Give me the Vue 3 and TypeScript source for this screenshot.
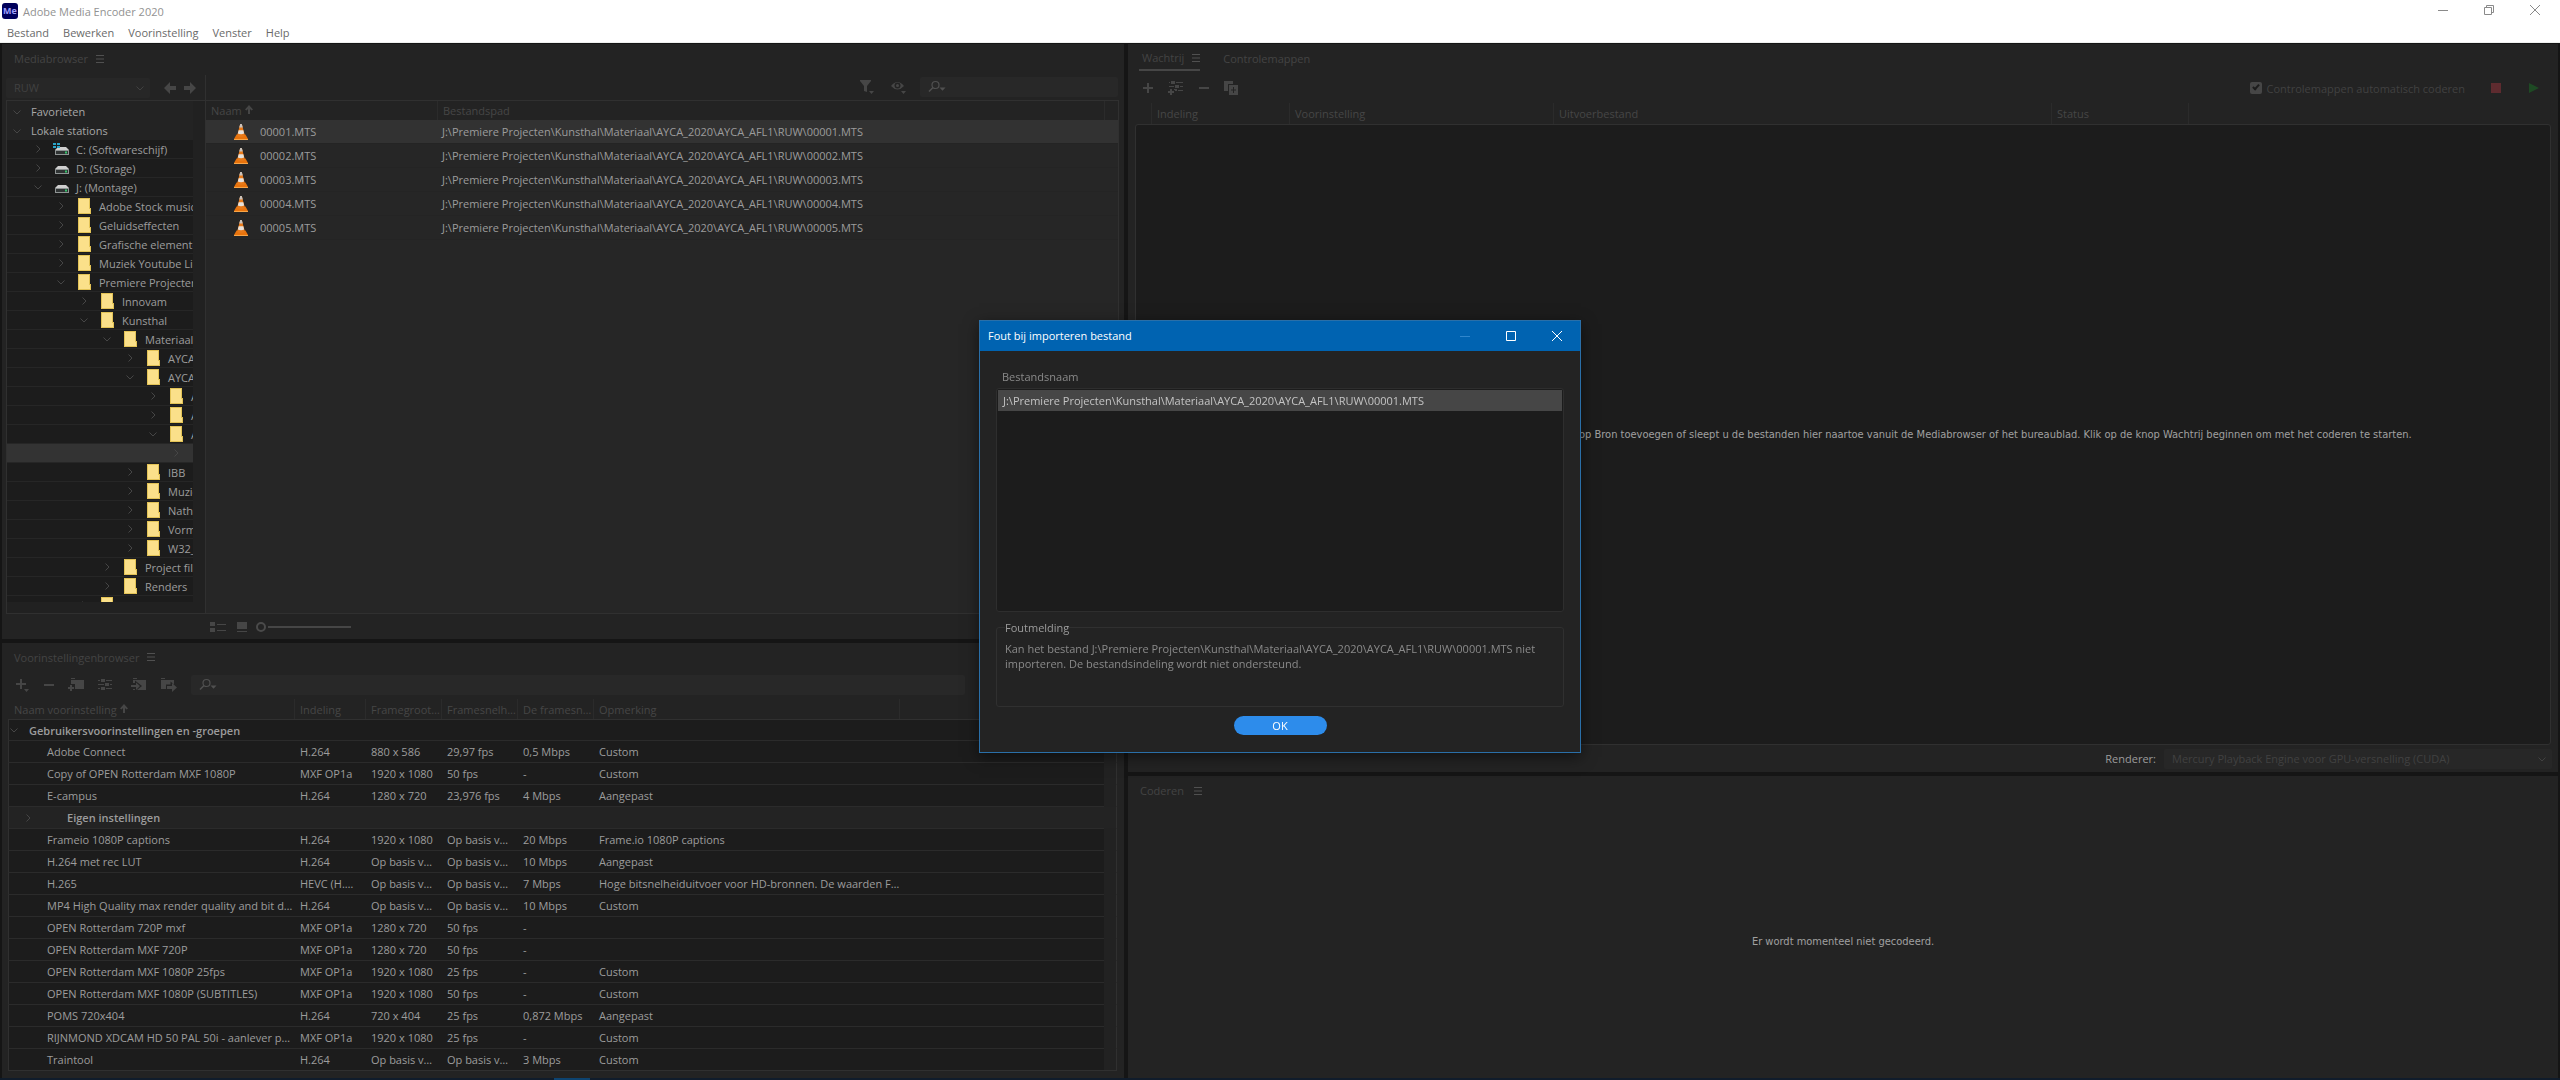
<script setup lang="ts">
interface TreeNode {
  label: string
  level: number
  open: boolean
  icon: 'drive' | 'system' | 'folder'
  selected?: boolean
}

interface Preset {
  name: string
  group?: boolean
  cells?: string[]
}

const menus = ['Bestand', 'Bewerken', 'Voorinstelling', 'Venster', 'Help']

const node = (level: number, open: boolean, label: string, icon: TreeNode['icon'] = 'folder', selected = false): TreeNode =>
  ({ level, open, label, icon, selected })

const tree: TreeNode[] = [
  node(0, false, 'C: (Softwareschijf)', 'system'),
  node(0, false, 'D: (Storage)', 'drive'),
  node(0, true, 'J: (Montage)', 'drive'),
  node(1, false, 'Adobe Stock music'),
  node(1, false, 'Geluidseffecten'),
  node(1, false, 'Grafische elementen'),
  node(1, false, 'Muziek Youtube Library'),
  node(1, true, 'Premiere Projecten'),
  node(2, false, 'Innovam'),
  node(2, true, 'Kunsthal'),
  node(3, true, 'Materiaal'),
  node(4, false, 'AYCA_2019'),
  node(4, true, 'AYCA_2020'),
  node(5, false, 'AYCA_AFL3'),
  node(5, false, 'AYCA_AFL2'),
  node(5, true, 'AYCA_AFL1'),
  node(6, false, 'RUW', 'folder', true),
  node(4, false, 'IBB'),
  node(4, false, 'Muziek'),
  node(4, false, 'Nathalie'),
  node(4, false, 'Vormgeving'),
  node(4, false, 'W32_2020'),
  node(3, false, 'Project files'),
  node(3, false, 'Renders'),
  node(2, false, 'Overig'),
]

const folderPath = 'J:\\Premiere Projecten\\Kunsthal\\Materiaal\\AYCA_2020\\AYCA_AFL1\\RUW\\'
const files = ['00001.MTS', '00002.MTS', '00003.MTS', '00004.MTS', '00005.MTS']

const presetColumns = ['Indeling', 'Framegroot…', 'Framesnelh…', 'De framesn…', 'Opmerking']

const presets: Preset[] = [
  { name: 'Adobe Connect', cells: ['H.264', '880 x 586', '29,97 fps', '0,5 Mbps', 'Custom'] },
  { name: 'Copy of OPEN Rotterdam MXF 1080P', cells: ['MXF OP1a', '1920 x 1080', '50 fps', '-', 'Custom'] },
  { name: 'E-campus', cells: ['H.264', '1280 x 720', '23,976 fps', '4 Mbps', 'Aangepast'] },
  { name: 'Eigen instellingen', group: true },
  { name: 'Frameio 1080P captions', cells: ['H.264', '1920 x 1080', 'Op basis v…', '20 Mbps', 'Frame.io 1080P captions'] },
  { name: 'H.264 met rec LUT', cells: ['H.264', 'Op basis v…', 'Op basis v…', '10 Mbps', 'Aangepast'] },
  { name: 'H.265', cells: ['HEVC (H.…', 'Op basis v…', 'Op basis v…', '7 Mbps', 'Hoge bitsnelheiduitvoer voor HD-bronnen. De waarden F…'] },
  { name: 'MP4 High Quality max render quality and bit d…', cells: ['H.264', 'Op basis v…', 'Op basis v…', '10 Mbps', 'Custom'] },
  { name: 'OPEN Rotterdam 720P mxf', cells: ['MXF OP1a', '1280 x 720', '50 fps', '-', ''] },
  { name: 'OPEN Rotterdam MXF 720P', cells: ['MXF OP1a', '1280 x 720', '50 fps', '-', ''] },
  { name: 'OPEN Rotterdam MXF 1080P 25fps', cells: ['MXF OP1a', '1920 x 1080', '25 fps', '-', 'Custom'] },
  { name: 'OPEN Rotterdam MXF 1080P (SUBTITLES)', cells: ['MXF OP1a', '1920 x 1080', '50 fps', '-', 'Custom'] },
  { name: 'POMS 720x404', cells: ['H.264', '720 x 404', '25 fps', '0,872 Mbps', 'Aangepast'] },
  { name: 'RIJNMOND XDCAM HD 50 PAL 50i - aanlever p…', cells: ['MXF OP1a', '1920 x 1080', '25 fps', '-', 'Custom'] },
  { name: 'Traintool', cells: ['H.264', 'Op basis v…', 'Op basis v…', '3 Mbps', 'Custom'] },
]
</script>

<template>
  <div class="app">
    <!-- Shared glyphs -->
    <svg class="sprite" width="0" height="0" aria-hidden="true">
      <symbol id="i-menu" viewBox="0 0 8 8"><path d="M0 .5h8M0 4h8M0 7.500h8" stroke="currentColor" fill="none" /></symbol>
      <symbol id="i-right" viewBox="0 0 8 8"><path d="M2.500 .5 6 4 2.500 7.500" stroke="currentColor" fill="none" /></symbol>
      <symbol id="i-down" viewBox="0 0 8 8"><path d="M.5 2.500 4 6 7.500 2.500" stroke="currentColor" fill="none" /></symbol>
      <symbol id="i-sort" viewBox="0 0 8 10"><path d="M4 0 8 4.500 6.500 5.500 5 4V9H3V4L1.500 5.500 0 4.500Z" fill="currentColor" /></symbol>
      <symbol id="i-search" viewBox="0 0 18 14">
        <circle cx="7.500" cy="5" r="3.500" stroke="currentColor" fill="none" stroke-width="1.200" />
        <path d="M5 7.500 1 11.500" stroke="currentColor" fill="none" stroke-width="1.400" />
        <path d="M11.500 7.500h6l-3 3.200z" fill="currentColor" />
      </symbol>
      <symbol id="i-plus" viewBox="0 0 10 10"><path d="M5 0V10M0 5H10" stroke="currentColor" stroke-width="2" fill="none" /></symbol>
      <symbol id="i-minus" viewBox="0 0 10 10"><path d="M0 5H10" stroke="currentColor" stroke-width="2" fill="none" /></symbol>
      <symbol id="i-folder" viewBox="0 0 14 16">
        <path d="M0 0H12V10H13V16H0Z" fill="#e3c356" />
        <path d="M1 1H11V15H1Z" fill="#fbe08a" />
        <path d="M11 11H12V15H11Z" fill="#fbe08a" />
      </symbol>
      <symbol id="i-drive" viewBox="0 0 14 8">
        <path d="M3 0H11L14 3H0Z" fill="#cfcfcf" />
        <path d="M0 3H14V8H0Z" fill="#8f9494" />
        <path d="M1 4H13V7H1Z" fill="#303434" />
        <path d="M10 4.500H12V6.500H10Z" fill="#35c46a" />
      </symbol>
      <symbol id="i-cone" viewBox="0 0 14 16">
        <path d="M2.500 10.500H11.500L14 15V16H0V15Z" fill="#e8730c" />
        <path d="M0 15H14V16H0Z" fill="#f7a548" />
        <path d="M6.200 0H7.800L11 12Q7 14.200 3 12Z" fill="#e87a1a" />
        <path d="M6.200 0H7.800L8.800 3.500H5.200Z" fill="#c9c4bf" />
        <path d="M4.700 6.200H9.300L10.200 9.500Q7 11 3.800 9.500Z" fill="#e6e2dd" />
      </symbol>
    </svg>

    <header class="titlebar">
      <div class="title-row">
        <span class="logo">Me</span>
        <h1>Adobe Media Encoder 2020</h1>
        <div class="window-buttons">
          <button type="button" aria-label="Minimaliseren"><svg width="10" height="10"><path d="M0 5.500H10" /></svg></button>
          <button type="button" aria-label="Verkleinen"><svg width="10" height="10"><path d="M.5 2.500H7.500V9.500H.5ZM2.500 2.500V.5H9.500V7.500H7.500" /></svg></button>
          <button type="button" aria-label="Sluiten"><svg width="10" height="10"><path d="M0 0 10 10M10 0 0 10" /></svg></button>
        </div>
      </div>
      <nav class="menubar">
        <button v-for="m in menus" :key="m" type="button">{{ m }}</button>
      </nav>
    </header>

    <main class="workspace">
      <div class="column left-column">
        <!-- Mediabrowser -->
        <section class="panel media">
          <div class="tabs">
            <button type="button" class="tab">Mediabrowser</button>
            <svg class="burger" width="8" height="8"><use href="#i-menu" /></svg>
          </div>
          <div class="media-tools">
            <div class="media-nav">
              <div class="select-wrap folder-select">
                <select aria-label="Map"><option>RUW</option></select>
                <svg width="8" height="8"><use href="#i-down" /></svg>
              </div>
              <button type="button" class="icon-btn" aria-label="Vorige">
                <svg width="12" height="12"><path d="M0 6 6 0V4H12V8H6V12Z" fill="currentColor" /></svg>
              </button>
              <button type="button" class="icon-btn" aria-label="Volgende">
                <svg width="12" height="12"><path d="M12 6 6 0V4H0V8H6V12Z" fill="currentColor" /></svg>
              </button>
            </div>
            <button type="button" class="icon-btn" aria-label="Filter">
              <svg width="14" height="14"><path d="M0 0H11V1L7 6V12L4 11V6L0 1ZM9 11H14L11.500 14Z" fill="currentColor" /></svg>
            </button>
            <button type="button" class="icon-btn eye" aria-label="Weergave">
              <svg width="15" height="14">
                <path d="M0 6Q6.500-2 13 6 6.500 13 0 6ZM10 11H15L12.500 14Z" fill="currentColor" />
                <circle cx="6.500" cy="5.500" r="3" fill="#232323" /><circle cx="6.500" cy="5.500" r="1.500" fill="currentColor" />
              </svg>
            </button>
            <label class="search media-search">
              <svg width="18" height="14"><use href="#i-search" /></svg>
              <input type="text" aria-label="Zoeken in media">
            </label>
          </div>

          <div class="media-body">
            <div class="tree-pane">
              <ul class="tree">
                <li class="root"><svg width="8" height="8"><use href="#i-down" /></svg>Favorieten</li>
                <li class="root"><svg width="8" height="8"><use href="#i-down" /></svg>Lokale stations</li>
                <li
                  v-for="(n, i) in tree" :key="i" class="node" :class="{ selected: n.selected }"
                  :style="{ paddingLeft: 27 + n.level * 23 + 'px' }"
                >
                  <svg class="chev" width="8" height="8"><use :href="n.open ? '#i-down' : '#i-right'" /></svg>
                  <svg v-if="n.icon === 'folder'" class="folder" width="14" height="16"><use href="#i-folder" /></svg>
                  <svg v-else class="drive" width="14" height="16">
                    <use href="#i-drive" x="0" y="6" width="14" height="8" />
                    <path v-if="n.icon === 'system'" d="M-2 2H1V4H-2ZM2 2H5V4H2ZM-2 5H1V7H-2ZM2 5H5V7H2Z" fill="#2aa5c9" />
                  </svg>
                  <span>{{ n.label }}</span>
                </li>
              </ul>
            </div>
            <div class="file-pane">
              <table class="files">
                <colgroup><col class="c-file"><col><col class="c-end"></colgroup>
                <thead>
                  <tr>
                    <th>Naam <svg width="8" height="10"><use href="#i-sort" /></svg></th>
                    <th>Bestandspad</th>
                    <th />
                  </tr>
                </thead>
                <tbody>
                  <tr v-for="(f, i) in files" :key="f" :class="{ selected: i === 0 }">
                    <td><div class="file-name"><svg width="14" height="16"><use href="#i-cone" /></svg>{{ f }}</div></td>
                    <td>{{ folderPath + f }}</td>
                    <td />
                  </tr>
                </tbody>
              </table>
            </div>
          </div>

          <div class="media-footer">
            <button type="button" class="icon-btn" aria-label="Lijst">
              <svg width="16" height="10"><path d="M0 0H5V4H0ZM0 6H5V10H0ZM7 2H16V3H7ZM7 8H16V9H7Z" fill="currentColor" /></svg>
            </button>
            <button type="button" class="icon-btn" aria-label="Miniaturen">
              <svg width="10" height="10"><path d="M0 0H10V7H0ZM0 9H10V10H0Z" fill="currentColor" /></svg>
            </button>
            <input type="range" class="zoom" value="0" aria-label="Miniatuurgrootte">
          </div>
        </section>

        <!-- Voorinstellingenbrowser -->
        <section class="panel presets">
          <div class="tabs">
            <button type="button" class="tab">Voorinstellingenbrowser</button>
            <svg class="burger" width="8" height="8"><use href="#i-menu" /></svg>
          </div>
          <div class="preset-tools">
            <button type="button" class="icon-btn" aria-label="Nieuw">
              <svg width="14" height="14"><path d="M4 1H6V5H10V7H6V11H4V7H0V5H4ZM8 11H13L10.500 14Z" fill="currentColor" /></svg>
            </button>
            <button type="button" class="icon-btn" aria-label="Verwijderen">
              <svg width="10" height="10"><use href="#i-minus" /></svg>
            </button>
            <button type="button" class="icon-btn" aria-label="Nieuwe groep">
              <svg width="16" height="14">
                <path d="M3 0H7V1H3ZM3 2H16V11H3Z" fill="currentColor" />
                <path d="M1 6H7V12H1Z" fill="#232323" />
                <path d="M2 7H4V9H6V11H4V13H2V11H0V9H2Z" fill="currentColor" />
              </svg>
            </button>
            <button type="button" class="icon-btn" aria-label="Instellingen">
              <svg width="14" height="14"><path d="M0 2H2V3H0ZM3 1H7V4H3ZM8 2H14V3H8ZM0 6H6V7H0ZM7 5H11V8H7ZM12 6H14V7H12ZM0 10H2V11H0ZM3 9H7V12H3ZM8 10H14V11H8Z" fill="currentColor" /></svg>
            </button>
            <button type="button" class="icon-btn import" aria-label="Importeren">
              <svg width="16" height="14">
                <path d="M2 0H6V1H2ZM2 2H15V12H2Z" fill="currentColor" />
                <path d="M0 5H4V2.500L11 8 4 13.500V11H0Z" fill="#232323" />
                <path d="M0 7H5V4.500L9 8 5 12V9H0Z" fill="currentColor" />
              </svg>
            </button>
            <button type="button" class="icon-btn" aria-label="Exporteren">
              <svg width="16" height="14">
                <path d="M0 0H4V1H0ZM0 2H13V11H0Z" fill="currentColor" />
                <path d="M5 6.500H9.500V3.500L16 9V12H5Z" fill="#232323" />
                <path d="M6 8H11V5L16 9.500 11 14V11H6Z" fill="currentColor" />
              </svg>
            </button>
            <label class="search preset-search">
              <svg width="18" height="14"><use href="#i-search" /></svg>
              <input type="text" aria-label="Zoeken in voorinstellingen">
            </label>
          </div>
          <table class="preset-table">
            <colgroup>
              <col class="c-name"><col class="c-format"><col class="c-mid"><col class="c-mid"><col class="c-mid"><col class="c-note"><col><col class="c-gutter">
            </colgroup>
            <thead>
              <tr>
                <th>Naam voorinstelling <svg width="8" height="10"><use href="#i-sort" /></svg></th>
                <th v-for="c in presetColumns" :key="c">{{ c }}</th>
                <th />
                <th class="plain" />
              </tr>
            </thead>
            <tbody>
              <tr class="top-group">
                <td colspan="7"><div><svg width="8" height="8"><use href="#i-down" /></svg>Gebruikersvoorinstellingen en -groepen</div></td>
                <td class="gutter" />
              </tr>
              <template v-for="p in presets" :key="p.name">
                <tr v-if="p.group" class="sub-group">
                  <td colspan="7"><div><svg width="8" height="8"><use href="#i-right" /></svg>{{ p.name }}</div></td>
                  <td class="gutter" />
                </tr>
                <tr v-else>
                  <td class="preset-name">{{ p.name }}</td>
                  <td v-for="(c, i) in p.cells" :key="i">{{ c }}</td>
                  <td />
                  <td class="gutter" />
                </tr>
              </template>
            </tbody>
          </table>
        </section>
      </div>

      <div class="column right-column">
        <!-- Wachtrij -->
        <section class="panel queue">
          <div class="tabs">
            <div class="active-tab">
              <button type="button" class="tab">Wachtrij</button>
              <svg class="burger" width="8" height="8"><use href="#i-menu" /></svg>
            </div>
            <button type="button" class="tab">Controlemappen</button>
          </div>
          <div class="queue-tools">
            <button type="button" class="icon-btn" aria-label="Bron toevoegen"><svg width="10" height="10"><use href="#i-plus" /></svg></button>
            <button type="button" class="icon-btn" aria-label="Uitvoer toevoegen">
              <svg width="16" height="14"><path d="M1 1H2V2H1ZM3 0H7V3H3ZM8 1H15V2H8ZM1 5H6V6H1ZM7 4H11V7H7ZM12 5H15V6H12ZM2 8H4V10H6V12H4V14H2V12H0V10H2ZM6 8H9V10H7V9H6ZM10 9H15V10H10Z" fill="currentColor" /></svg>
            </button>
            <button type="button" class="icon-btn" aria-label="Verwijderen"><svg width="10" height="10"><use href="#i-minus" /></svg></button>
            <button type="button" class="icon-btn duplicate" aria-label="Dupliceren">
              <svg width="14" height="14"><path d="M0 0H9V3H4V10H0Z" fill="currentColor" /><path fill-rule="evenodd" d="M5 4H14V14H5ZM9 6V8.500H7V9.500H9V12H10V9.500H12V8.500H10V6Z" fill="currentColor" /></svg>
            </button>
            <label class="auto"><input type="checkbox" checked>Controlemappen automatisch coderen</label>
            <button type="button" class="icon-btn stop" aria-label="Stoppen"><svg width="10" height="10"><path d="M0 0H10V10H0Z" fill="#5e2b2f" /></svg></button>
            <button type="button" class="icon-btn start" aria-label="Wachtrij beginnen"><svg width="10" height="10"><path d="M0 0 10 5 0 10Z" fill="#1e4a24" /></svg></button>
          </div>
          <table class="queue-table">
            <colgroup><col class="q-pad"><col class="q-format"><col class="q-preset"><col class="q-output"><col class="q-status"><col></colgroup>
            <thead>
              <tr><th /><th>Indeling</th><th>Voorinstelling</th><th>Uitvoerbestand</th><th>Status</th><th /></tr>
            </thead>
          </table>
          <div class="drop-zone">
            <p>Als u items aan deze wachtrij wilt toevoegen, klikt u op de knop Bron toevoegen of sleept u de bestanden hier naartoe vanuit de Mediabrowser of het bureaublad. Klik op de knop Wachtrij beginnen om met het coderen te starten.</p>
          </div>
          <div class="renderer">
            <label for="renderer">Renderer:</label>
            <div class="select-wrap">
              <select id="renderer"><option>Mercury Playback Engine voor GPU-versnelling (CUDA)</option></select>
              <svg width="8" height="8"><use href="#i-down" /></svg>
            </div>
          </div>
        </section>

        <!-- Coderen -->
        <section class="panel encoding">
          <div class="tabs">
            <button type="button" class="tab">Coderen</button>
            <svg class="burger" width="8" height="8"><use href="#i-menu" /></svg>
          </div>
          <p>Er wordt momenteel niet gecodeerd.</p>
        </section>
      </div>
    </main>

    <div class="taskbar"><span /></div>

    <!-- Foutmelding -->
    <div class="overlay">
      <div class="dialog" role="dialog" aria-labelledby="dialog-title">
        <div class="dialog-title">
          <h2 id="dialog-title">Fout bij importeren bestand</h2>
          <button type="button" class="dim" aria-label="Minimaliseren"><svg width="10" height="10"><path d="M0 5.500H10" /></svg></button>
          <button type="button" aria-label="Maximaliseren"><svg width="10" height="10"><path d="M.5 .5H9.500V9.500H.5Z" /></svg></button>
          <button type="button" aria-label="Sluiten"><svg width="10" height="10"><path d="M0 0 10 10M10 0 0 10" /></svg></button>
        </div>
        <div class="dialog-body">
          <span id="file-label" class="list-label">Bestandsnaam</span>
          <ul class="error-files" aria-labelledby="file-label">
            <li>{{ folderPath + files[0] }}</li>
          </ul>
          <fieldset>
            <legend>Foutmelding</legend>
            <p>Kan het bestand {{ folderPath + files[0] }} niet importeren. De bestandsindeling wordt niet ondersteund.</p>
          </fieldset>
          <button type="button" class="ok">OK</button>
        </div>
      </div>
    </div>
  </div>
</template>

<style>
html,
body {
  margin: 0;
  background: #151515;
}
</style>

<style scoped>
.app {
  display: flex;
  flex-direction: column;
  height: 100vh;
  overflow: hidden;
  background: #151515;
  color: #9c9c9c;
  font: 11px/15px "Open Sans", "Noto Sans", sans-serif;
}
.app *,
.app *::before {
  box-sizing: border-box;
}
.sprite {
  position: absolute;
}
svg {
  flex: none;
  overflow: visible;
}
h1,
h2,
p,
ul {
  margin: 0;
  padding: 0;
  font: inherit;
  list-style: none;
}
button,
input,
select {
  margin: 0;
  padding: 0;
  border: 0;
  background: none;
  color: inherit;
  font: inherit;
}
.icon-btn {
  display: flex;
  flex: none;
  color: #464646;
}

/* Title bar */
.titlebar {
  flex: none;
  height: 43px;
  background: #fff;
  border-bottom: 1px solid #eef0ee;
}
.title-row {
  display: flex;
  align-items: center;
  height: 22px;
  padding-left: 2px;
}
.logo {
  width: 16px;
  height: 16px;
  margin-right: 5px;
  border-radius: 3px;
  background: #00005b;
  color: #9f9ffb;
  font-size: 9px;
  font-weight: 700;
  text-align: center;
}
.title-row h1 {
  color: #929292;
}
.window-buttons {
  display: flex;
  gap: 36px;
  margin-left: auto;
  padding: 0 20px 2px 0;
}
.window-buttons button {
  display: flex;
}
.window-buttons path {
  fill: none;
  stroke: #8a8a8a;
}
.menubar {
  display: flex;
  gap: 14px;
  padding: 2px 0 0 7px;
  line-height: 17px;
  color: #6a6a6a;
}

/* Workspace */
.workspace {
  flex: 1;
  display: grid;
  grid-template-columns: 1122fr 1430fr;
  gap: 4px;
  min-height: 0;
  padding: 1px 2px 0;
}
.column {
  display: grid;
  gap: 4px;
  min-width: 0;
  min-height: 0;
}
.left-column {
  grid-template-rows: 595fr 435fr;
}
.right-column {
  grid-template-rows: 728fr 302fr;
}
.panel {
  display: flex;
  flex-direction: column;
  min-width: 0;
  min-height: 0;
  overflow: hidden;
  background: #232323;
}
.tabs {
  display: flex;
  flex: none;
  align-items: center;
  gap: 8px;
  height: 29px;
  padding-left: 12px;
  color: #444;
}
.burger {
  color: #505050;
}
.search {
  display: flex;
  align-items: center;
  height: 20px;
  padding-left: 8px;
  border-radius: 2px;
  background: #282828;
  color: #505050;
}
.search input {
  flex: 1;
  min-width: 0;
  outline: 0;
}
.select-wrap {
  position: relative;
  flex: 1;
  height: 20px;
  border-radius: 2px;
  background: #272727;
  color: #414141;
}
.select-wrap select {
  width: 100%;
  height: 100%;
  padding-left: 8px;
  appearance: none;
}
.select-wrap svg {
  position: absolute;
  top: 6px;
  right: 6px;
}

/* Mediabrowser */
.media-tools {
  display: flex;
  flex: none;
  align-items: center;
  height: 27px;
  padding: 0 6px 0 4px;
}
.media-nav {
  display: flex;
  align-items: center;
  gap: 8px;
  width: 200px;
  height: 25px;
  margin-right: auto;
  padding-right: 9px;
  border-right: 1px solid #303030;
  align-self: end;
}
.folder-select {
  flex: none;
  width: 144px;
  margin-right: 6px;
}
.eye {
  margin: 0 14px 0 17px;
}
.media-search {
  width: 198px;
}
.media-body {
  display: flex;
  flex: 1;
  min-height: 0;
  margin: 0 5px 0 4px;
  border: 1px solid #303030;
}
.tree-pane {
  width: 199px;
  padding: 0 12px 11px 0;
  border-right: 1px solid #303030;
  background: #212121;
}
.tree {
  height: 100%;
  padding-top: 1px;
  overflow: hidden;
  background: #232323;
}
.tree li {
  display: flex;
  align-items: center;
  height: 19px;
  white-space: nowrap;
  overflow: hidden;
}
.tree .root {
  gap: 10px;
  padding-left: 6px;
  color: #a8a8a8;
}
.tree svg {
  color: #464646;
}
.tree .node {
  border-bottom: 1px solid #262626;
  background: #1c1c1c;
}
.tree .node.selected {
  background: #333;
}
.folder,
.drive {
  margin: 0 7px 0 13px;
}
.file-pane {
  flex: 1;
  min-width: 0;
  background: #262626;
}
table {
  width: 100%;
  table-layout: fixed;
  border-collapse: separate;
  border-spacing: 0;
}
th,
td {
  overflow: hidden;
  padding: 0 0 0 5px;
  text-align: left;
  white-space: nowrap;
  font-weight: 400;
}
th {
  color: #464646;
  border-left: 1px solid #2b2b2b;
}
th:first-child {
  border-left: 0;
}
.files th {
  height: 19px;
  background: #232323;
}
.files td {
  height: 24px;
  border-bottom: 1px solid #242424;
}
.files .selected td {
  background: #323232;
}
.c-file {
  width: 231px;
}
.c-end {
  width: 14px;
}
.file-name {
  display: flex;
  align-items: center;
  gap: 12px;
  padding-left: 23px;
}
.media-footer {
  display: flex;
  flex: none;
  align-items: center;
  gap: 11px;
  height: 25px;
  padding-left: 208px;
}
.zoom {
  width: 95px;
  height: 10px;
  margin-left: -2px;
  appearance: none;
  background: linear-gradient(#464646, #464646) 12px 4px / 83px 2px no-repeat;
}
.zoom::-webkit-slider-thumb {
  appearance: none;
  width: 10px;
  height: 10px;
  border: 2px solid #4a4a4a;
  border-radius: 50%;
  background: #232323;
}

/* Voorinstellingen */
.presets .tabs {
  height: 28px;
}
.preset-tools {
  display: flex;
  flex: none;
  align-items: center;
  height: 28px;
  padding-left: 14px;
  gap: 14px;
}
.import {
  margin-left: 5px;
}
.preset-search {
  width: 774px;
}
.preset-table {
  width: auto;
  margin: 0 7px 0 6px;
}
.preset-table th {
  height: 20px;
}
.preset-table th:first-child {
  padding-left: 6px;
}
.preset-table th.plain {
  border-left: 0;
}
.preset-table td {
  height: 22px;
  padding-left: 6px;
  border-bottom: 1px solid #2b2b2b;
  background: #1c1c1c;
}
.preset-table td:first-child {
  border-left: 1px solid #303030;
}
.preset-table .top-group td {
  border-top: 1px solid #303030;
}
.preset-table td.preset-name {
  padding-left: 38px;
}
.preset-table td.gutter {
  border-right: 1px solid #303030;
  border-bottom-color: #222;
  background: #222;
}
.preset-table tr:last-child td {
  border-bottom-color: #303030;
}
.top-group div,
.sub-group div {
  display: flex;
  align-items: center;
  gap: 11px;
  font-weight: 600;
}
.top-group svg,
.sub-group svg {
  color: #464646;
}
.preset-table .top-group td:first-child {
  padding-left: 1px;
}
.preset-table .sub-group td {
  background: #232323;
}
.preset-table .sub-group td:first-child {
  padding-left: 15px;
}
.sub-group div {
  gap: 35px;
}
.c-name {
  width: 286px;
}
.c-format {
  width: 71px;
}
.c-mid {
  width: 76px;
}
.c-note {
  width: 301px;
}
.c-gutter {
  width: 13px;
}

/* Wachtrij */
.queue .tabs {
  gap: 23px;
  padding-left: 11px;
}
.active-tab {
  display: flex;
  align-items: center;
  gap: 8px;
  align-self: stretch;
  padding: 2px 0 0 3px;
  border-bottom: 2px solid #464646;
  margin-bottom: 2px;
}
.queue-tools {
  display: flex;
  flex: none;
  align-items: center;
  height: 30px;
  padding: 0 19px 0 15px;
  gap: 15px;
}
.auto {
  display: flex;
  align-items: center;
  gap: 4px;
  margin-left: auto;
  color: #414141;
}
.auto input {
  width: 12px;
  height: 12px;
  border-radius: 2px;
  appearance: none;
  background: #464646;
}
.auto input::before {
  content: "";
  display: block;
  width: 4px;
  height: 7px;
  margin: 1px 0 0 4px;
  border: solid #1c1c1c;
  border-width: 0 2px 2px 0;
  transform: rotate(42deg);
}
.stop {
  margin: 0 13px 0 11px;
}
.queue-table {
  width: auto;
  margin: 0 7px 0 8px;
}
.queue-table th {
  height: 21px;
}
.q-pad {
  width: 15px;
}
.q-format {
  width: 138px;
}
.q-preset {
  width: 264px;
}
.q-output {
  width: 498px;
}
.q-status {
  width: 137px;
}
.drop-zone {
  display: grid;
  flex: 1;
  place-items: center;
  min-height: 0;
  margin: 0 7px;
  border: 1px solid #303030;
  border-radius: 3px;
  background: #1c1c1c;
  color: #a0a0a0;
  font-family: "DejaVu Sans Condensed", "Open Sans", sans-serif;
}
.renderer {
  display: flex;
  flex: none;
  align-items: center;
  justify-content: flex-end;
  gap: 8px;
  height: 27px;
  padding-right: 6px;
}
.renderer .select-wrap {
  flex: 0 0 388px;
}

/* Coderen */
.encoding .tabs {
  gap: 10px;
}
.encoding p {
  flex: 1;
  display: grid;
  place-items: center;
  color: #a0a0a0;
  font-family: "DejaVu Sans Condensed", "Open Sans", sans-serif;
}

.taskbar {
  flex: none;
  display: flex;
  height: 2px;
  background: #101c2b;
}
.taskbar span {
  width: 36px;
  margin-left: 554px;
  background: #0d4370;
}

/* Dialog */
.overlay {
  position: fixed;
  inset: 0;
  display: grid;
  place-items: center;
  padding-bottom: 8px;
}
.dialog {
  width: 602px;
  border: 1px solid #2a6fa8;
  background: #232323;
  box-shadow: 0 4px 14px rgba(0, 0, 0, 0.5);
}
.dialog-title {
  display: flex;
  align-items: center;
  height: 30px;
  padding: 0 18px 0 8px;
  gap: 36px;
  background: #0063b1;
  color: #fff;
}
.dialog-title h2 {
  margin-right: auto;
}
.dialog-title button {
  display: flex;
}
.dialog-title path {
  fill: none;
  stroke: #fff;
}
.dialog-title .dim path {
  stroke: #2f86cd;
}
.dialog-body {
  display: flex;
  flex-direction: column;
  padding: 18px 16px 17px;
}
.list-label {
  padding-left: 6px;
  line-height: 16px;
  color: #8a8a8a;
}
.error-files {
  height: 224px;
  margin-top: 3px;
  padding: 1px;
  border: 1px solid #2e2e2e;
  border-radius: 3px;
  background: #1c1c1c;
}
.error-files li {
  padding-left: 5px;
  line-height: 21px;
  background: #464646;
  color: #c4c4c4;
}
fieldset {
  height: 87px;
  margin: 8px 0 9px;
  padding: 6px 8px 0;
  border: 1px solid #303030;
  border-radius: 3px;
  color: #8a8a8a;
}
legend {
  padding: 0;
  color: #9c9c9c;
}
.ok {
  align-self: center;
  width: 93px;
  height: 19px;
  border-radius: 10px;
  background: #2d8ceb;
  color: #fff;
}
</style>
